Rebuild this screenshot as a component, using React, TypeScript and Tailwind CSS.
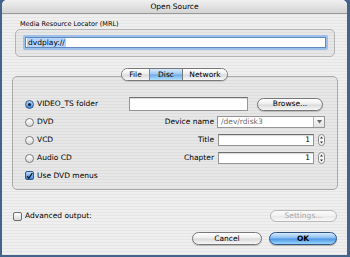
import type { ReactNode } from 'react';

const stripes =
  'bg-[image:repeating-linear-gradient(180deg,#efefef_0px,#efefef_2px,#e5e5e5_2px,#e5e5e5_3px)]';

function Radio({ checked }: { checked?: boolean }) {
  if (checked) {
    return (
      <span className="flex h-[9px] w-[9px] shrink-0 items-center justify-center rounded-full border border-[#34598c] bg-[linear-gradient(180deg,#b9dafa,#3f87dd)]">
        <span className="h-[3px] w-[3px] rounded-full bg-[#13233d]" />
      </span>
    );
  }
  return (
    <span className="h-[9px] w-[9px] shrink-0 rounded-full border border-[#7a7a7a] bg-[linear-gradient(180deg,#ffffff,#dadada)]" />
  );
}

function Check({ checked }: { checked?: boolean }) {
  if (checked) {
    return (
      <span className="flex h-[9px] w-[9px] shrink-0 items-center justify-center rounded-[2px] border border-[#34598c] bg-[linear-gradient(180deg,#b9dafa,#3f87dd)]">
        <svg width="8" height="8" viewBox="0 0 8 8">
          <path d="M1.2 4.2 L3.2 6.4 L7.2 0.6" fill="none" stroke="#0f1c33" strokeWidth="1.5" />
        </svg>
      </span>
    );
  }
  return (
    <span className="h-[9px] w-[9px] shrink-0 rounded-[2px] border border-[#6f6f6f] bg-[linear-gradient(180deg,#ffffff,#dadada)]" />
  );
}

function Button({
  children,
  className,
  primary,
  disabled,
}: {
  children: ReactNode;
  className: string;
  primary?: boolean;
  disabled?: boolean;
}) {
  let look =
    'border-[#777777] text-black bg-[linear-gradient(180deg,#ffffff_0%,#ececec_48%,#d9d9d9_52%,#f7f7f7_100%)] shadow-[0_1px_1px_rgba(0,0,0,0.2)]';
  if (primary) {
    look =
      'border-[#2f5386] text-black font-bold bg-[linear-gradient(180deg,#d7ebfd_0%,#86bcf1_46%,#4d95e4_54%,#9ad6fc_100%)] shadow-[0_1px_1px_rgba(0,0,0,0.25)]';
  }
  if (disabled) {
    look =
      'border-[#b9b9b9] text-[#a8a8a8] bg-[linear-gradient(180deg,#fbfbfb_0%,#f1f1f1_50%,#e9e9e9_52%,#f8f8f8_100%)]';
  }
  return (
    <div
      className={`flex items-center justify-center rounded-full border text-[7.5px] leading-none ${look} ${className}`}
    >
      {children}
    </div>
  );
}

function Stepper() {
  return (
    <svg width="7" height="12" viewBox="0 0 7 12" className="ml-[4px] shrink-0">
      <rect x="0.5" y="0.5" width="6" height="11" rx="3" fill="#f6f6f6" stroke="#8a8a8a" />
      <path d="M3.5 2.6 L5 4.6 L2 4.6 Z" fill="#333" />
      <path d="M3.5 9.4 L5 7.4 L2 7.4 Z" fill="#333" />
    </svg>
  );
}

const field =
  'bg-white border border-[#959595] border-t-[#6e6e6e] shadow-[inset_0_1px_1px_rgba(0,0,0,0.15)]';

export default function App() {
  return (
    <div className="h-[257px] w-[350px] overflow-hidden bg-[#44638a] font-['DejaVu_Sans',Verdana,sans-serif] text-black">
      <div className={`ml-[2px] mr-[3px] flex h-[255px] flex-col overflow-hidden rounded-t-[5px] ${stripes}`}>
        {/* title bar */}
        <div className="flex h-[14px] shrink-0 items-center justify-center border-b border-[#9a9a9a] bg-[linear-gradient(180deg,#f0f0f0,#d4d4d4)] text-[7.5px] leading-none">
          Open Source
        </div>

        <div className="ml-[18px] mt-[5px] h-[10px] text-[6.5px] leading-[10px]">Media Resource Locator (MRL)</div>

        <div className="ml-[13px] h-[28px] w-[320px] rounded-[5px] border border-[#b3b3b3] bg-black/[0.03] pl-[7px] pt-[5px]">
          <div className="h-[15px] w-[305px] rounded-[2px] bg-[#9dc0ea] p-[2px]">
            <div className="flex h-full items-center border border-[#6288bd] bg-white pl-[1px]">
              <span className="bg-[#b5d5ff] px-[1px] text-[7.5px] leading-[9px]">dvdplay://</span>
            </div>
          </div>
        </div>

        {/* tabs */}
        <div className="relative z-10 mt-[11px] flex h-[13px] justify-center">
          <div className="flex overflow-hidden rounded-full border border-[#777777] text-[7.5px] leading-none shadow-[0_1px_1px_rgba(0,0,0,0.15)]">
            <div className="flex w-[27px] items-center justify-center bg-[linear-gradient(180deg,#ffffff_0%,#ececec_48%,#d9d9d9_52%,#f7f7f7_100%)]">
              File
            </div>
            <div className="flex w-[33px] items-center justify-center border-l border-[#6d87aa] bg-[linear-gradient(180deg,#d7ebfd_0%,#9cc8f3_46%,#6eaaea_54%,#b3dffc_100%)]">
              Disc
            </div>
            <div className="flex w-[45px] items-center justify-center border-l border-[#777777] bg-[linear-gradient(180deg,#ffffff_0%,#ececec_48%,#d9d9d9_52%,#f7f7f7_100%)]">
              Network
            </div>
          </div>
        </div>

        {/* panel */}
        <div className="-mt-[5px] ml-[10px] h-[114px] w-[326px] rounded-[5px] border border-[#a9a9a9] bg-black/[0.03] pl-[12px] pt-[18px] text-[7.5px] leading-none">
          <div className="flex h-[18px] items-center">
            <div className="flex w-[104px] items-center gap-[3px]">
              <Radio checked />
              <span>VIDEO_TS folder</span>
            </div>
            <div className={`h-[14px] w-[119px] ${field}`} />
            <Button className="ml-[9px] h-[13px] w-[66px]">Browse...</Button>
          </div>

          <div className="flex h-[18px] items-center">
            <div className="flex w-[104px] items-center gap-[3px]">
              <Radio />
              <span>DVD</span>
            </div>
            <span className="w-[85px] text-right">Device name</span>
            <div className="ml-[3px] flex h-[12px] w-[108px] border border-[#959595] bg-white">
              <span className="flex flex-1 items-center pl-[3px] text-[#6e6e6e]">/dev/rdisk3</span>
              <span className="flex w-[11px] items-center justify-center border-l border-[#b5b5b5] bg-[linear-gradient(180deg,#fafafa,#e2e2e2)]">
                <svg width="5" height="4" viewBox="0 0 5 4">
                  <path d="M0 0 L5 0 L2.5 3.5 Z" fill="#666" />
                </svg>
              </span>
            </div>
          </div>

          <div className="flex h-[18px] items-center">
            <div className="flex w-[104px] items-center gap-[3px]">
              <Radio />
              <span>VCD</span>
            </div>
            <span className="w-[85px] text-right">Title</span>
            <div className={`ml-[4px] flex h-[12px] w-[96px] items-center justify-end pr-[3px] ${field}`}>1</div>
            <Stepper />
          </div>

          <div className="flex h-[18px] items-center">
            <div className="flex w-[104px] items-center gap-[3px]">
              <Radio />
              <span>Audio CD</span>
            </div>
            <span className="w-[85px] text-right">Chapter</span>
            <div className={`ml-[4px] flex h-[12px] w-[96px] items-center justify-end pr-[3px] ${field}`}>1</div>
            <Stepper />
          </div>

          <div className="flex h-[17px] items-center gap-[3px]">
            <Check checked />
            <span>Use DVD menus</span>
          </div>
        </div>

        {/* advanced output */}
        <div className="mt-[20px] flex h-[12px] items-center justify-between pl-[11px] pr-[10px] text-[7.5px] leading-none">
          <div className="flex items-center gap-[3px]">
            <Check />
            <span>Advanced output:</span>
          </div>
          <Button disabled className="h-[12px] w-[67px]">
            Settings...
          </Button>
        </div>

        <div className="mt-[10px] flex h-[13px] justify-end gap-[7px] pr-[10px]">
          <Button className="h-[13px] w-[70px]">Cancel</Button>
          <Button primary className="h-[13px] w-[68px]">
            OK
          </Button>
        </div>
      </div>
    </div>
  );
}
